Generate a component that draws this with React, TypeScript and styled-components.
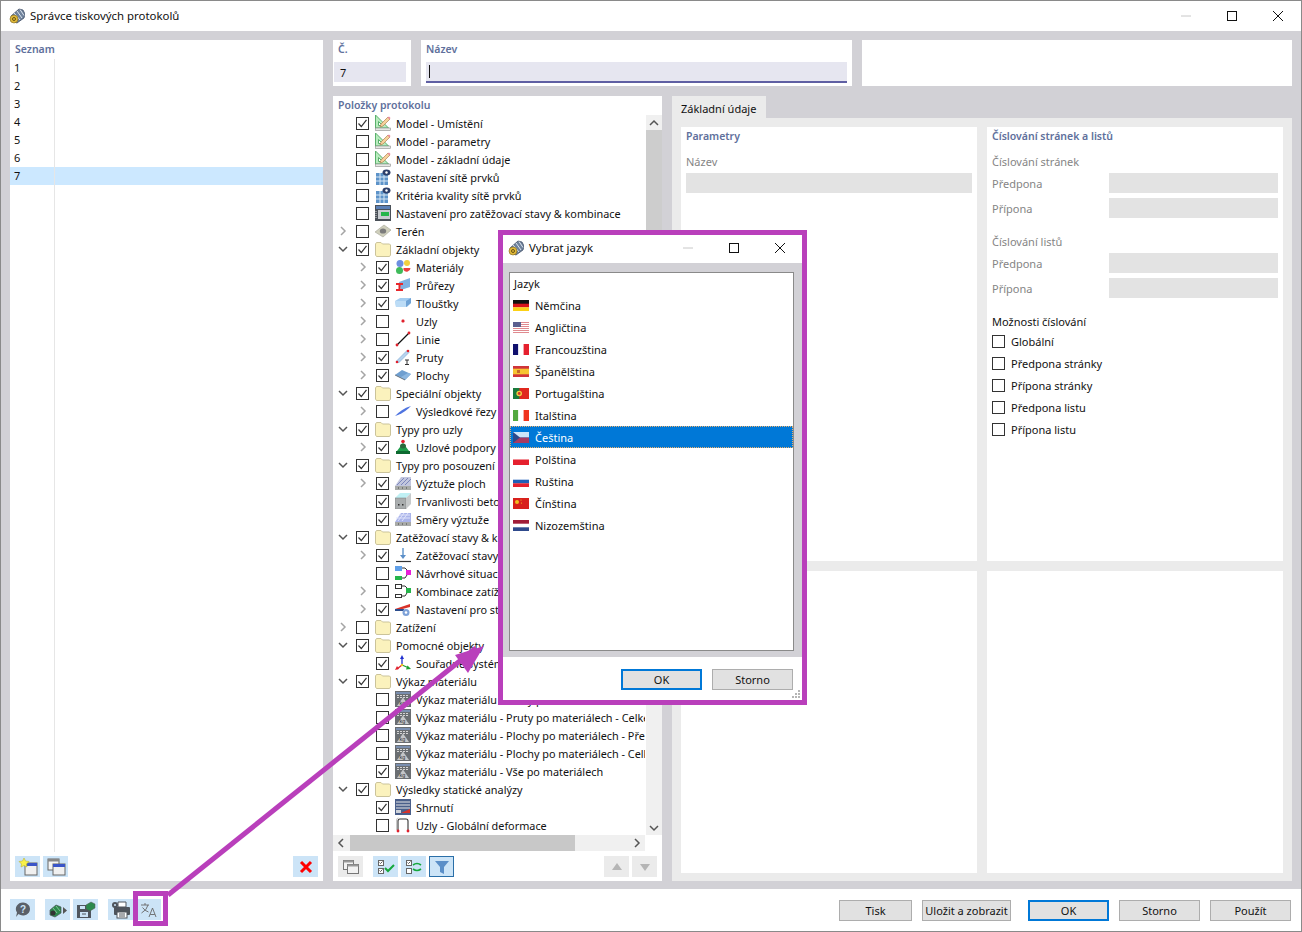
import React from 'react';
import styled, { createGlobalStyle } from 'styled-components';

const Global = createGlobalStyle`
  html, body { margin: 0; padding: 0; background: #fff; }
  body { font-family: "Noto Sans", "Open Sans", sans-serif; font-size: 11px; color: #111; }
  * { box-sizing: border-box; }
`;

const Page = styled.div`
  position: relative; width: 1302px; height: 932px; overflow: hidden;
  display: flex; flex-direction: column; border: 1px solid #8a8a8a; background: #fff;
`;
const TitleBar = styled.div`
  height: ${p => p.$h}px; flex: none; display: flex; align-items: center; background: #fff;
  padding: 0 0 ${p => p.$pb ?? 0}px ${p => p.$pl}px;
`;
const TitleText = styled.span`
  font-size: 11.4px; margin-left: ${p => p.$ml}px; flex: 1; color: #111;
`;
const WinGroup = styled.div`
  display: flex; height: 100%; margin-right: ${p => p.$mr ?? 0}px;
`;
const WinButton = styled.div`
  width: ${p => p.$w}px; height: 100%; display: flex; align-items: center; justify-content: center;
`;
const Body = styled.div`
  flex: 1; background: #d2d1d6; padding: 9px 9px 8px; display: grid; grid-template-columns: 313px 1fr; gap: 10px;
  min-height: 0;
`;
const Panel = styled.section`
  background: #fff; display: flex; flex-direction: column; min-height: 0; min-width: 0;
`;
const Heading = styled.div`
  font-weight: 600; font-size: 10.5px; color: #60709c; height: ${p => p.$h ?? 19}px; line-height: 18px; padding-left: 5px; flex: none;
`;
const ListBody = styled.div`
  flex: 1; display: flex; flex-direction: column; min-height: 0;
`;
const ListRow = styled.div`
  height: 18px; display: flex; flex: none; background: ${p => (p.$sel ? '#cce8ff' : 'transparent')};
`;
const NumCell = styled.div`
  width: 45px; border-right: 1px solid #e6e6e6; padding-left: 4px; line-height: 18px;
`;
const ListFiller = styled.div`
  flex: 1; display: flex;
`;
const ToolRow = styled.div`
  height: ${p => p.$h ?? 29}px; flex: none; display: flex; align-items: flex-start; padding: ${p => p.$pad ?? '4px 5px 0'}; gap: 3px;
`;
const Spacer = styled.div`
  width: ${p => (p.$w ? `${p.$w}px` : 'auto')}; flex: ${p => (p.$w ? 'none' : 1)};
`;
const IconBtn = styled.div`
  width: 25px; height: 21px; flex: none; display: flex; align-items: center; justify-content: center;
  background: ${p => (p.$off ? '#ebebeb' : '#cce4f7')};
  border: ${p => (p.$active ? '1px solid #2a6fa8' : 'none')};
`;
const RightCol = styled.div`
  display: flex; flex-direction: column; gap: 10px; min-height: 0; min-width: 0;
`;
const TopRow = styled.div`
  height: 46px; flex: none; display: grid; grid-template-columns: 78px 431px 430px; gap: 10px;
`;
const NumInput = styled.div`
  height: 20px; margin: 0 5px 0 1px; background: #e6e6f0; padding-left: 6px; line-height: 21px; font-size: 11px;
`;
const NameInput = styled.div`
  height: 21px; margin: 0 5px; background: #e6e6f0; border-bottom: 2px solid #5f5fa3; padding: 3px 0 2px 3px;
  display: flex;
`;
const Caret = styled.div`
  width: 1px; height: 13px; background: #111;
`;
const BottomRow = styled.div`
  flex: 1; min-height: 0; display: grid; grid-template-columns: 329px 620px; gap: 10px;
`;
const TreeArea = styled.div`
  flex: 1; min-height: 0; display: flex; padding-right: 1px;
`;
const TreeView = styled.div`
  width: 312px; flex: none; overflow: hidden;
`;
const TreeRow = styled.div`
  height: 18px; display: flex; align-items: center; white-space: nowrap; padding-left: ${p => 3 + p.$depth * 20}px;
`;
const Chevron = styled.div`
  width: 14px; flex: none; margin-right: 6px; display: flex; justify-content: center;
`;
const CheckBox = styled.div`
  width: 13px; height: 13px; flex: none; border: 1px solid #333; background: #fff; display: flex; align-items: center; justify-content: center;
`;
const TreeIcon = styled.div`
  width: 16px; height: 16px; flex: none; margin: 0 5px 0 6px;
`;
const TreeLabel = styled.span`
  color: #111; font-size: 10.85px;
`;
const VScroll = styled.div`
  width: 16px; flex: none; background: #f0f0f0; display: flex; flex-direction: column; margin-left: 1px;
  margin-top: 1px;
`;
const ScrollArrow = styled.div`
  width: ${p => p.$w}px; height: ${p => p.$h}px; flex: none; display: flex; align-items: center; justify-content: center;
`;
const VThumb = styled.div`
  height: 520px; flex: none; background: #cdcdcd;
`;
const HScroll = styled.div`
  height: 16px; flex: none; width: 312px; background: #f0f0f0; display: flex;
`;
const HThumb = styled.div`
  width: 225px; flex: none; margin-left: 1px; background: #c8c8c8;
`;
const TabPane = styled.div`
  display: flex; flex-direction: column; min-height: 0;
`;
const Tab = styled.div`
  width: 94px; height: 22px; flex: none; background: #ebebeb; padding-left: 9px; line-height: 25px; color: #111;
`;
const TabBody = styled.div`
  flex: 1; min-height: 0; background: #ebebeb; padding: 9px; display: grid;
  grid-template-columns: 296px 296px; grid-template-rows: 434px 302px; gap: 10px;
`;
const SubPanel = styled.div`
  background: #fff; padding: 0 5px; display: flex; flex-direction: column;
`;
const SubHeading = styled.div`
  font-weight: 600; font-size: 10.5px; color: #60709c; height: 18px; line-height: 18px; margin-bottom: 8px;
`;
const MutedLabel = styled.div`
  color: #858585; height: 20px; line-height: 18px; margin-top: ${p => p.$mt ?? 0}px;
`;
const WideInput = styled.div`
  height: 20px; background: #e3e3e3; flex: none;
`;
const FieldRow = styled.div`
  display: flex; align-items: center; justify-content: space-between; height: 20px; margin-top: ${p => p.$mt ?? 0}px; color: #858585;
`;
const FieldInput = styled.div`
  width: 169px; height: 20px; background: #e3e3e3;
`;
const OptionsTitle = styled.div`
  color: #111; height: 17px; line-height: 18px; margin-top: 15px;
`;
const OptionRow = styled.div`
  height: 22px; display: flex; align-items: center; gap: 6px; color: #111;
`;
const Footer = styled.div`
  height: 42px; flex: none; background: #fff; display: flex; align-items: flex-start; padding: 10px 10px 0 9px;
`;
const ButtonGroup = styled.div`
  display: flex; margin-top: 1px;
`;
const PushButton = styled.div`
  width: ${p => p.$w ?? 81}px; height: 21px; flex: none; background: #e1e1e1; margin-left: ${p => p.$ml ?? 0}px;
  border: ${p => (p.$def ? '2px solid #0078d7' : '1px solid #adadad')};
  display: flex; align-items: center; justify-content: center; color: #111; white-space: nowrap;
`;
const Highlight = styled.div`
  position: absolute; left: 132px; top: 890px; width: 35px; height: 35px; border: 5px solid #b93fbb;
`;
const ArrowLayer = styled.svg`
  position: absolute; left: -1px; top: -1px; pointer-events: none;
`;
const Dialog = styled.div`
  position: absolute; left: 497px; top: 229px; width: 309px; height: 475px; border: 5px solid #b93fbb; background: #fff;
  display: flex; flex-direction: column;
`;
const DialogBody = styled.div`
  flex: 1; min-height: 0; background: #d2d1d6; padding: 9px 8px 6px 6px; display: flex;
`;
const LangList = styled.div`
  flex: 1; background: #fff; border: 1px solid #8a8a8a;
`;
const LangHeader = styled.div`
  height: 21px; line-height: 22px; padding-left: 4px; color: #111;
`;
const LangRow = styled.div`
  height: 22px; display: flex; align-items: center; padding-left: 3px; gap: 6px; color: ${p => (p.$sel ? '#fff' : '#111')};
  background: ${p => (p.$sel ? '#0078d7' : 'transparent')};
  outline: ${p => (p.$sel ? '1px dotted #e8b070' : 'none')}; outline-offset: -1px;
`;
const DialogFooter = styled.div`
  position: relative; height: 43px; flex: none; background: #fff; display: flex; align-items: flex-start; padding: 12px 9px 0 118px; gap: 10px;
`;
const Grip = styled.svg`
  position: absolute; right: 1px; bottom: 1px;
`;

const Svg = ({ children, w = 16, h = 16 }: any) => <svg width={w} height={h} viewBox={`0 0 ${w} ${h}`} style={{ display: 'block' }}>{children}</svg>;

const Logo = () => (
  <Svg>
    <path d="M2 8 10 1l4 1 2 4-1 4-7 5-3-1z" fill="#6f829c" stroke="#33425a" strokeWidth=".7" />
    <path d="M5 5l6 7M8 3l5 7M11 1.500l4 6" stroke="#dde4ee" strokeWidth="1" />
    <circle cx="5" cy="11" r="4" fill="#e0b93a" stroke="#7a6420" strokeWidth=".6" />
    <circle cx="5" cy="11" r="1.500" fill="none" stroke="#6a5412" strokeWidth="1" />
  </Svg>
);
const Check = () => <Svg w={11} h={11}><path d="M1.500 5.500 4.300 8.500 9.500 1.800" fill="none" stroke="#333" strokeWidth="1.200" /></Svg>;
const ChevR = () => <Svg w={8} h={10}><path d="M2 1l4 4-4 4" fill="none" stroke="#a5a5a5" strokeWidth="1.500" /></Svg>;
const ChevD = () => <Svg w={10} h={8}><path d="M1 2l4 4 4-4" fill="none" stroke="#555" strokeWidth="1.500" /></Svg>;

const icons: Record<string, React.ReactNode> = {
  model: <><path d="M.5 0v13h13z" fill="#b8ecbe" stroke="#5ab06c" /><path d="M3.500 6.500v4h4z" fill="#fff" stroke="#5ab06c" /><path d="M6 9l7-7 2 2-7 7-3 1z" fill="#f6d29c" stroke="#b08050" strokeWidth=".7" /><path d="M12.500 2.500l2 2 1-1.500-1.500-1.500z" fill="#e88a9a" /><rect x=".5" y="13" width="15" height="2.500" fill="#e6e8e4" stroke="#8a8a8a" strokeWidth=".6" /></>,
  mesh: <><rect x="1" y="4" width="12" height="12" fill="#5d93c9" /><path d="M5 4v12M9 4v12M1 8h12M1 12h12" stroke="#d6e6f4" /><ellipse cx="11.500" cy="3.500" rx="4" ry="3" fill="#2d3f6a" /><circle cx="11.500" cy="3.500" r="1.200" fill="#fff" /></>,
  loads: <><rect x="0" y="0" width="16" height="16" fill="#4a5058" /><rect x="1" y="1" width="14" height="3" fill="#5a7fb5" /><rect x="3" y="5" width="12" height="9" fill="#c8ccd0" /><rect x="6" y="7" width="8" height="4" fill="#25b54a" /><path d="M1 6v8" stroke="#ddd" strokeDasharray="1 1" /></>,
  terrain: <><path d="M0 9 9 2l7 5-8 7z" fill="#cfcfbc" stroke="#a5a595" strokeWidth=".6" /><ellipse cx="8" cy="8" rx="3.200" ry="2.600" fill="#7c7c7c" /></>,
  folder: <path d="M.5 14V3l1-1.500h4.500L7.500 3h7l1 1v10l-1 1.500h-13z" fill="#fbf2bd" stroke="#cbc39a" />,
  materials: <><circle cx="5" cy="4.500" r="3.500" fill="#6d8fe0" /><circle cx="12" cy="4" r="3" fill="#f0d040" /><circle cx="4.500" cy="11.500" r="3.500" fill="#3fbb5a" /><path d="M8.500 9h7a3.800 3.800 0 0 1-7 2z" fill="#e94040" /></>,
  section: <><path d="M4 5l11-4v9l-9 3z" fill="#7fb1e2" /><path d="M1 6h7v2H5.500v4H8v2H1v-2h2.500V8H1z" fill="#e8282c" /></>,
  thick: <><path d="M0 6l5-3h11v5l-4 4H1z" fill="#a5cdf0" /><path d="M11 12V6l5-3v5z" fill="#6fa3d6" /><path d="M0 6h11v6H1z" fill="#bcdcf6" /></>,
  node: <rect x="6.500" y="6.500" width="3" height="3" rx="1.200" fill="#e0202c" />,
  line: <><path d="M2 14 14 2" stroke="#111" strokeWidth="1.200" /><circle cx="2" cy="14" r="1.400" fill="#e0202c" /><circle cx="14" cy="2" r="1.400" fill="#e0202c" /></>,
  member: <><path d="M1.500 12 12 1.500l2 2L3.500 14z" fill="#b6d3ef" stroke="#7ba4cf" strokeWidth=".6" /><circle cx="2" cy="13" r="1.300" fill="#e0202c" /><circle cx="13" cy="2" r="1.300" fill="#e0202c" /><path d="M10 11h4M12 11v4.500M10 15.500h4" stroke="#333" /></>,
  surface: <><path d="M0 8 7 3l9 4-6 6z" fill="#6f9fd0" /><path d="M0 8l10 5 6-6-3-1-7 4z" fill="#8db7e0" /><path d="M0 8l10 5" stroke="#555" strokeWidth=".7" /></>,
  cut: <path d="M0 13C4 9 9 5 16 3c-3 3-8 7-13 9z" fill="#4f74e0" />,
  support: <><circle cx="8" cy="2.500" r="1.800" fill="#e0202c" /><path d="M8 4 2 12h12z" fill="#1f9d4a" /><ellipse cx="8" cy="7" rx="3" ry="2.500" fill="#2a6a3c" /><rect x="1" y="12" width="14" height="3" fill="#0d6a30" /></>,
  rebar: <><path d="M0 11 6 2h10v9z" fill="#c2c6de" /><path d="M2 10l7-7M6 10l7-7M10 10l6-6" stroke="#7d87bc" /><rect x="0" y="11" width="16" height="4" fill="#a8aaa8" /><path d="M3 13h1M7 13h1M11 13h1" stroke="#444" /></>,
  durab: <><path d="M0 5 5 0h11L11 5z" fill="#bff0f4" /><rect x="0" y="5" width="11" height="11" fill="#a9adae" stroke="#777" strokeWidth=".5" /><path d="M11 5l5-5v11l-5 5z" fill="#c7cacb" /><rect x="3" y="11" width="1.500" height="1.500" fill="#333" /><rect x="7" y="11" width="1.500" height="1.500" fill="#333" /></>,
  dir: <><path d="M0 11 6 2h10v9z" fill="#aab4ea" /><path d="M3 10l6-8M7 10l6-8M1 7h14M4 4h11" stroke="#dfe3fa" /><rect x="0" y="11" width="16" height="4" fill="#a8aaa8" /><path d="M3 13h1M7 13h1M11 13h1" stroke="#444" /></>,
  lc: <><path d="M8 1v9" stroke="#6f9fd0" strokeWidth="1.600" /><path d="M5 8l3 4 3-4z" fill="#5c8fc8" /><path d="M1 14.500h15" stroke="#333" strokeWidth="1.200" /></>,
  situ: <><rect x="0" y="1" width="7" height="5" fill="#5f9fe8" /><rect x="0" y="11" width="7" height="4" fill="#25b54a" /><rect x="11" y="5" width="5" height="5" fill="#e820d8" /><path d="M7 3h3l2 2M7 13h3l2-3" fill="none" stroke="#333" /></>,
  combo: <><rect x=".500" y="1.500" width="6" height="4" fill="#fff" stroke="#333" /><rect x=".500" y="11.500" width="6" height="3" fill="#fff" stroke="#333" /><rect x="11" y="5" width="5" height="5" fill="#25b54a" /><path d="M7 3h3l2 2M7 13h3l2-3" fill="none" stroke="#333" /></>,
  stat: <><path d="M0 8l15-5v3L0 10z" fill="#d8332a" /><path d="M0 8h9v2H0z" fill="#2b4c8c" /><circle cx="11" cy="11.500" r="3.500" fill="#7ea2d8" /><circle cx="11" cy="11.500" r="1.300" fill="#fff" /></>,
  coord: <><path d="M7 10V2" stroke="#2030d0" strokeWidth="1.300" /><path d="M5 4l2-4 2 4z" fill="#2030d0" /><path d="M7 10l7 3" stroke="#20a030" strokeWidth="1.300" /><path d="M12.500 10.500 16 14l-5 .5z" fill="#20a030" /><path d="M7 10l-5 4" stroke="#e0202c" strokeWidth="1.300" /><path d="M0 15l2-4 2 3z" fill="#e0202c" /><circle cx="7" cy="10" r="1.200" fill="#f0c020" /></>,
  mat: <><rect x="0" y="0" width="16" height="16" fill="#6a6e72" /><rect x="1" y="1" width="14" height="2" fill="#7a8fb0" /><path d="M2 4.500h12M2 6.500h12" stroke="#d4d4d4" strokeDasharray="2 1" /><path d="M8 6.500 2 15h12z" fill="#c4c6c8" /><text x="4.500" y="14" fontSize="5.500" fill="#333" fontFamily="Liberation Sans">kg</text></>,
  sum: <><rect x="0" y="0" width="16" height="16" fill="#4a5f8a" /><path d="M1 3h14M1 6h14M1 9h14" stroke="#e6e6e6" /><path d="M6 14l9-4v4z" fill="#d8332a" /><rect x="1" y="11" width="5" height="3" fill="#cfd3da" /></>,
  defo: <><path d="M3 14V4q0-2 2-2h6q2 0 2 2v10" fill="none" stroke="#333" strokeWidth="1.100" /><path d="M1.500 13V3q0-2 2-2" fill="none" stroke="#c8c8c8" /><circle cx="3" cy="14" r="1.400" fill="#e0202c" /><circle cx="13" cy="14" r="1.400" fill="#e0202c" /></>,
};

type R = [number, '' | 'r' | 'd', boolean, string, string];
const rows: R[] = [
  [0, '', true, 'model', 'Model - Umístění'],
  [0, '', false, 'model', 'Model - parametry'],
  [0, '', false, 'model', 'Model - základní údaje'],
  [0, '', false, 'mesh', 'Nastavení sítě prvků'],
  [0, '', false, 'mesh', 'Kritéria kvality sítě prvků'],
  [0, '', false, 'loads', 'Nastavení pro zatěžovací stavy & kombinace'],
  [0, 'r', false, 'terrain', 'Terén'],
  [0, 'd', true, 'folder', 'Základní objekty'],
  [1, 'r', true, 'materials', 'Materiály'],
  [1, 'r', true, 'section', 'Průřezy'],
  [1, 'r', true, 'thick', 'Tloušťky'],
  [1, 'r', false, 'node', 'Uzly'],
  [1, 'r', false, 'line', 'Linie'],
  [1, 'r', true, 'member', 'Pruty'],
  [1, 'r', true, 'surface', 'Plochy'],
  [0, 'd', true, 'folder', 'Speciální objekty'],
  [1, 'r', false, 'cut', 'Výsledkové řezy'],
  [0, 'd', true, 'folder', 'Typy pro uzly'],
  [1, 'r', true, 'support', 'Uzlové podpory'],
  [0, 'd', true, 'folder', 'Typy pro posouzení'],
  [1, 'r', true, 'rebar', 'Výztuže ploch'],
  [1, '', true, 'durab', 'Trvanlivosti betonu'],
  [1, '', true, 'dir', 'Směry výztuže'],
  [0, 'd', true, 'folder', 'Zatěžovací stavy & kombinace'],
  [1, 'r', true, 'lc', 'Zatěžovací stavy'],
  [1, '', false, 'situ', 'Návrhové situace'],
  [1, 'r', false, 'combo', 'Kombinace zatížení'],
  [1, 'r', true, 'stat', 'Nastavení pro statickou analýzu'],
  [0, 'r', false, 'folder', 'Zatížení'],
  [0, 'd', true, 'folder', 'Pomocné objekty'],
  [1, '', true, 'coord', 'Souřadné systémy'],
  [0, 'd', true, 'folder', 'Výkaz materiálu'],
  [1, '', false, 'mat', 'Výkaz materiálu - Pruty po materiálech - Přehled'],
  [1, '', false, 'mat', 'Výkaz materiálu - Pruty po materiálech - Celkem'],
  [1, '', false, 'mat', 'Výkaz materiálu - Plochy po materiálech - Přehled'],
  [1, '', false, 'mat', 'Výkaz materiálu - Plochy po materiálech - Celkem'],
  [1, '', true, 'mat', 'Výkaz materiálu - Vše po materiálech'],
  [0, 'd', true, 'folder', 'Výsledky statické analýzy'],
  [1, '', true, 'sum', 'Shrnutí'],
  [1, '', false, 'defo', 'Uzly - Globální deformace'],
];

const H3 = (a: string, b: string, c: string) => <><rect width="16" height="4" fill={a} /><rect y="3.700" width="16" height="3.700" fill={b} /><rect y="7.300" width="16" height="3.700" fill={c} /></>;
const V3 = (a: string, b: string, c: string) => <><rect width="5.400" height="11" fill={a} /><rect x="5.300" width="5.400" height="11" fill={b} /><rect x="10.600" width="5.400" height="11" fill={c} /></>;
const langs: [string, React.ReactNode][] = [
  ['Němčina', H3('#111', '#d8141c', '#fcd116')],
  ['Angličtina', <><rect width="16" height="11" fill="#fff" />{[0, 2, 4, 6, 8, 10].map(y => <rect key={y} y={y} width="16" height="1" fill="#e08a8f" />)}<rect width="8" height="5" fill="#5b5f8f" /></>],
  ['Francouzština', V3('#10106e', '#fff', '#e5202e')],
  ['Španělština', <><rect width="16" height="11" fill="#d0343a" /><rect y="2.700" width="16" height="5.600" fill="#f6c431" /><rect x="4" y="4" width="3" height="3" fill="#c66a2a" /></>],
  ['Portugalština', <><rect width="16" height="11" fill="#e0281e" /><rect width="6.400" height="11" fill="#1a7a3c" /><circle cx="6.200" cy="5.500" r="2.800" fill="#f0d040" /><circle cx="6.200" cy="5.500" r="1.400" fill="#d8332a" /></>],
  ['Italština', V3('#53a93f', '#fff', '#f0341e')],
  ['Čeština', <><rect width="16" height="5.500" fill="#cfe4f8" /><rect y="5.500" width="16" height="5.500" fill="#a83a62" /><path d="M0 0l7 5.500L0 11z" fill="#2a4a8c" /></>],
  ['Polština', <><rect width="16" height="5.500" fill="#fff" /><rect y="5.500" width="16" height="5.500" fill="#e5202e" /></>],
  ['Ruština', H3('#fff', '#1f5fb8', '#e5202e')],
  ['Čínština', <><rect width="16" height="11" fill="#d8201c" /><circle cx="4" cy="4" r="2" fill="#f0c020" /><circle cx="8" cy="2" r=".6" fill="#f0c020" /><circle cx="8.500" cy="5" r=".6" fill="#f0c020" /></>],
  ['Nizozemština', H3('#a01c38', '#fff', '#2f4a8c')],
];

const WinControls = ({ mr }: { mr?: number }) => (
  <WinGroup $mr={mr}>
    <WinButton $w={46}><Svg w={12} h={12}><path d="M1 6h10" stroke="#c8c8c8" /></Svg></WinButton>
    <WinButton $w={46}><Svg w={12} h={12}><rect x="1.500" y="1.500" width="9" height="9" fill="none" stroke="#111" /></Svg></WinButton>
    <WinButton $w={46}><Svg w={12} h={12}><path d="M1 1l10 10M11 1 1 11" stroke="#111" /></Svg></WinButton>
  </WinGroup>
);

export default function App() {
  return (
    <Page>
      <Global />
      <TitleBar $h={30} $pl={8} $pb={1}>
        <Logo />
        <TitleText $ml={5}>Správce tiskových protokolů</TitleText>
        <WinControls />
      </TitleBar>
      <Body>
        <Panel>
          <Heading>Seznam</Heading>
          <ListBody>
            {[1, 2, 3, 4, 5, 6, 7].map(n => (
              <ListRow key={n} $sel={n === 7}><NumCell>{n}</NumCell></ListRow>
            ))}
            <ListFiller><NumCell /></ListFiller>
          </ListBody>
          <ToolRow>
            <IconBtn>
              <Svg w={20} h={18}><rect x="7" y="5" width="12" height="12" fill="#f0f0f0" stroke="#666" /><rect x="7" y="5" width="12" height="3" fill="#3a55c8" /><path d="M6 0l1.500 3L11 3.500 8.500 6l.5 3-3-1.500L3 9l.5-3L1 3.500 4.500 3z" fill="#f8f04a" stroke="#b5a820" strokeWidth=".5" /></Svg>
            </IconBtn>
            <IconBtn>
              <Svg w={20} h={18}><rect x="2" y="1" width="11" height="11" fill="#f4f4f4" stroke="#666" /><rect x="2" y="1" width="11" height="2.500" fill="#888" /><rect x="7" y="6" width="12" height="11" fill="#f0f0f0" stroke="#666" /><rect x="7" y="6" width="12" height="3" fill="#3a55c8" /></Svg>
            </IconBtn>
            <Spacer />
            <IconBtn>
              <Svg w={14} h={14}><path d="M2 2l10 10M12 2 2 12" stroke="#f00" strokeWidth="3" /></Svg>
            </IconBtn>
          </ToolRow>
        </Panel>
        <RightCol>
          <TopRow>
            <Panel>
              <Heading $h={22}>Č.</Heading>
              <NumInput>7</NumInput>
            </Panel>
            <Panel>
              <Heading $h={22}>Název</Heading>
              <NameInput><Caret /></NameInput>
            </Panel>
            <Panel />
          </TopRow>
          <BottomRow>
            <Panel>
              <Heading $h={18}>Položky protokolu</Heading>
              <TreeArea>
                <TreeView>
                  {rows.map(([d, c, ch, ic, label], i) => (
                    <TreeRow key={i} $depth={d}>
                      <Chevron>{c === 'r' ? <ChevR /> : c === 'd' ? <ChevD /> : null}</Chevron>
                      <CheckBox>{ch && <Check />}</CheckBox>
                      <TreeIcon><Svg>{icons[ic]}</Svg></TreeIcon>
                      <TreeLabel>{label}</TreeLabel>
                    </TreeRow>
                  ))}
                </TreeView>
                <VScroll>
                  <ScrollArrow $w={16} $h={15}><Svg w={10} h={8}><path d="M1 6l4-4 4 4" fill="none" stroke="#555" strokeWidth="1.500" /></Svg></ScrollArrow>
                  <VThumb />
                  <Spacer />
                  <ScrollArrow $w={16} $h={15}><ChevD /></ScrollArrow>
                </VScroll>
              </TreeArea>
              <HScroll>
                <ScrollArrow $w={16} $h={16}><Svg w={8} h={10}><path d="M6 1 2 5l4 4" fill="none" stroke="#555" strokeWidth="1.500" /></Svg></ScrollArrow>
                <HThumb />
                <Spacer />
                <ScrollArrow $w={16} $h={16}><Svg w={8} h={10}><path d="M2 1l4 4-4 4" fill="none" stroke="#555" strokeWidth="1.500" /></Svg></ScrollArrow>
              </HScroll>
              <ToolRow $h={30} $pad="5px 5px 0">
                <IconBtn $off>
                  <Svg w={18} h={16}><rect x="1.500" y="1.500" width="10" height="9" fill="#f2f2f2" stroke="#777" /><rect x="1.500" y="1.500" width="10" height="2" fill="#999" /><rect x="5.500" y="5.500" width="11" height="9" fill="#f2f2f2" stroke="#777" /><rect x="5.500" y="5.500" width="11" height="2" fill="#999" /></Svg>
                </IconBtn>
                <Spacer $w={4} />
                <IconBtn>
                  <Svg w={18} h={16}><rect x="1.500" y="1.500" width="5" height="5" fill="#fff" stroke="#666" /><rect x="1.500" y="9.500" width="5" height="5" fill="#fff" stroke="#666" /><path d="M2.500 3.500l1 1 2-2M2.500 11.500l1 1 2-2" stroke="#333" fill="none" strokeWidth=".8" /><path d="M8 9l3 3 6-6" fill="none" stroke="#14a83c" strokeWidth="2" /></Svg>
                </IconBtn>
                <IconBtn>
                  <Svg w={18} h={16}><rect x="1.500" y="1.500" width="5" height="5" fill="#fff" stroke="#666" /><rect x="1.500" y="9.500" width="5" height="5" fill="#fff" stroke="#666" /><path d="M2.500 3.500l1 1 2-2" stroke="#333" fill="none" strokeWidth=".8" /><path d="M8 6q4-3 8 0M16 10q-4 3-8 0" fill="none" stroke="#14a83c" strokeWidth="1.600" /></Svg>
                </IconBtn>
                <IconBtn $active>
                  <Svg w={16} h={16}><path d="M1 2h14l-5 6v7l-4-2V8z" fill="#5b8fc8" /></Svg>
                </IconBtn>
                <Spacer />
                <IconBtn $off><Svg w={12} h={10}><path d="M6 1l5 7H1z" fill="#b5b5b5" /></Svg></IconBtn>
                <IconBtn $off><Svg w={12} h={10}><path d="M6 9 1 2h10z" fill="#b5b5b5" /></Svg></IconBtn>
              </ToolRow>
            </Panel>
            <TabPane>
              <Tab>Základní údaje</Tab>
              <TabBody>
                <SubPanel>
                  <SubHeading>Parametry</SubHeading>
                  <MutedLabel>Název</MutedLabel>
                  <WideInput />
                </SubPanel>
                <SubPanel>
                  <SubHeading>Číslování stránek a listů</SubHeading>
                  <MutedLabel>Číslování stránek</MutedLabel>
                  <FieldRow>Předpona<FieldInput /></FieldRow>
                  <FieldRow $mt={5}>Přípona<FieldInput /></FieldRow>
                  <MutedLabel $mt={15}>Číslování listů</MutedLabel>
                  <FieldRow>Předpona<FieldInput /></FieldRow>
                  <FieldRow $mt={5}>Přípona<FieldInput /></FieldRow>
                  <OptionsTitle>Možnosti číslování</OptionsTitle>
                  {['Globální', 'Předpona stránky', 'Přípona stránky', 'Předpona listu', 'Přípona listu'].map(t => (
                    <OptionRow key={t}><CheckBox />{t}</OptionRow>
                  ))}
                </SubPanel>
                <SubPanel />
                <SubPanel />
              </TabBody>
            </TabPane>
          </BottomRow>
        </RightCol>
      </Body>
      <Footer>
        <IconBtn>
          <Svg w={18} h={18}><path d="M9 1.500a7 6.500 0 1 1-4.500 11.500L2 16l1-4.500A7 6.500 0 0 1 9 1.500z" fill="#5a6068" /><text x="6" y="12" fontSize="10" fontWeight="700" fontFamily="Liberation Sans" fill="#cce4f7">?</text></Svg>
        </IconBtn>
        <Spacer $w={10} />
        <IconBtn>
          <Svg w={20} h={16}><path d="M2 8l6-5 5 2v6l-6 4-5-2z" fill="#2c8a4c" stroke="#4a5058" strokeWidth=".7" /><path d="M5 6l4 5M8 4l4 5" stroke="#9ad0ac" strokeWidth=".8" /><circle cx="5" cy="11" r="2.500" fill="#333" /><path d="M15 5l4 3.500-4 3.500z" fill="#555" /></Svg>
        </IconBtn>
        <Spacer $w={3} />
        <IconBtn>
          <Svg w={20} h={18}><path d="M1 4h11l3 3v10H1z" fill="#50565e" /><rect x="4" y="5" width="5" height="3" fill="#cce4f7" /><rect x="4" y="11" width="8" height="5" fill="#cce4f7" /><path d="M6 13h4" stroke="#50565e" /><path d="M10 4l5-3 4 2v4l-5 3-4-2z" fill="#2c8a4c" stroke="#555" strokeWidth=".5" /></Svg>
        </IconBtn>
        <Spacer $w={10} />
        <IconBtn>
          <Svg w={20} h={18}><path d="M7 1h8v5H7z" fill="#fff" stroke="#4e545c" /><rect x="3" y="6" width="16" height="8" rx="1" fill="#4e545c" /><rect x="6" y="11" width="10" height="6" fill="#fff" stroke="#4e545c" /><path d="M8 13h6M8 15h6" stroke="#4e545c" /><circle cx="4" cy="4" r="3" fill="#4e545c" /><circle cx="4" cy="4" r="1" fill="#cce4f7" /></Svg>
        </IconBtn>
        <Spacer $w={3} />
        <IconBtn>
          <Svg w={18} h={16}><path d="M1 3h8M5 1v2M8 3Q7 8 1.500 11M2.500 5.500Q5 9 8.500 10" fill="none" stroke="#666" strokeWidth=".9" /><path d="M9 15l3.500-9 3.500 9M10.200 12.500h4.600" fill="none" stroke="#666" strokeWidth=".9" /></Svg>
        </IconBtn>
        <Spacer />
        <ButtonGroup>
          <PushButton $w={73}>Tisk</PushButton>
          <PushButton $w={89} $ml={10}>Uložit a zobrazit</PushButton>
          <PushButton $def $ml={17}>OK</PushButton>
          <PushButton $ml={10}>Storno</PushButton>
          <PushButton $ml={10}>Použít</PushButton>
        </ButtonGroup>
      </Footer>
      <ArrowLayer width="1302" height="932" viewBox="0 0 1302 932">
        <path d="M168 895 476 648" stroke="#b93fbb" strokeWidth="5" fill="none" />
        <path d="M484 646 455 655 468 673z" fill="#b93fbb" />
      </ArrowLayer>
      <Highlight />
      <Dialog>
        <TitleBar $h={28} $pl={5} $pb={3}>
          <Logo />
          <TitleText $ml={5}>Vybrat jazyk</TitleText>
          <WinControls mr={-1} />
        </TitleBar>
        <DialogBody>
          <LangList>
            <LangHeader>Jazyk</LangHeader>
            {langs.map(([name, flag]) => (
              <LangRow key={name} $sel={name === 'Čeština'}>
                <Svg w={16} h={11}>{flag}</Svg>
                {name}
              </LangRow>
            ))}
          </LangList>
        </DialogBody>
        <DialogFooter>
          <PushButton $def>OK</PushButton>
          <PushButton>Storno</PushButton>
          <Grip width="9" height="9" viewBox="0 0 9 9">
            <path d="M6 0h2v2H6zM3 3h2v2H3zM6 3h2v2H6zM0 6h2v2H0zM3 6h2v2H3zM6 6h2v2H6z" fill="#b5b5b5" />
          </Grip>
        </DialogFooter>
      </Dialog>
    </Page>
  );
}
